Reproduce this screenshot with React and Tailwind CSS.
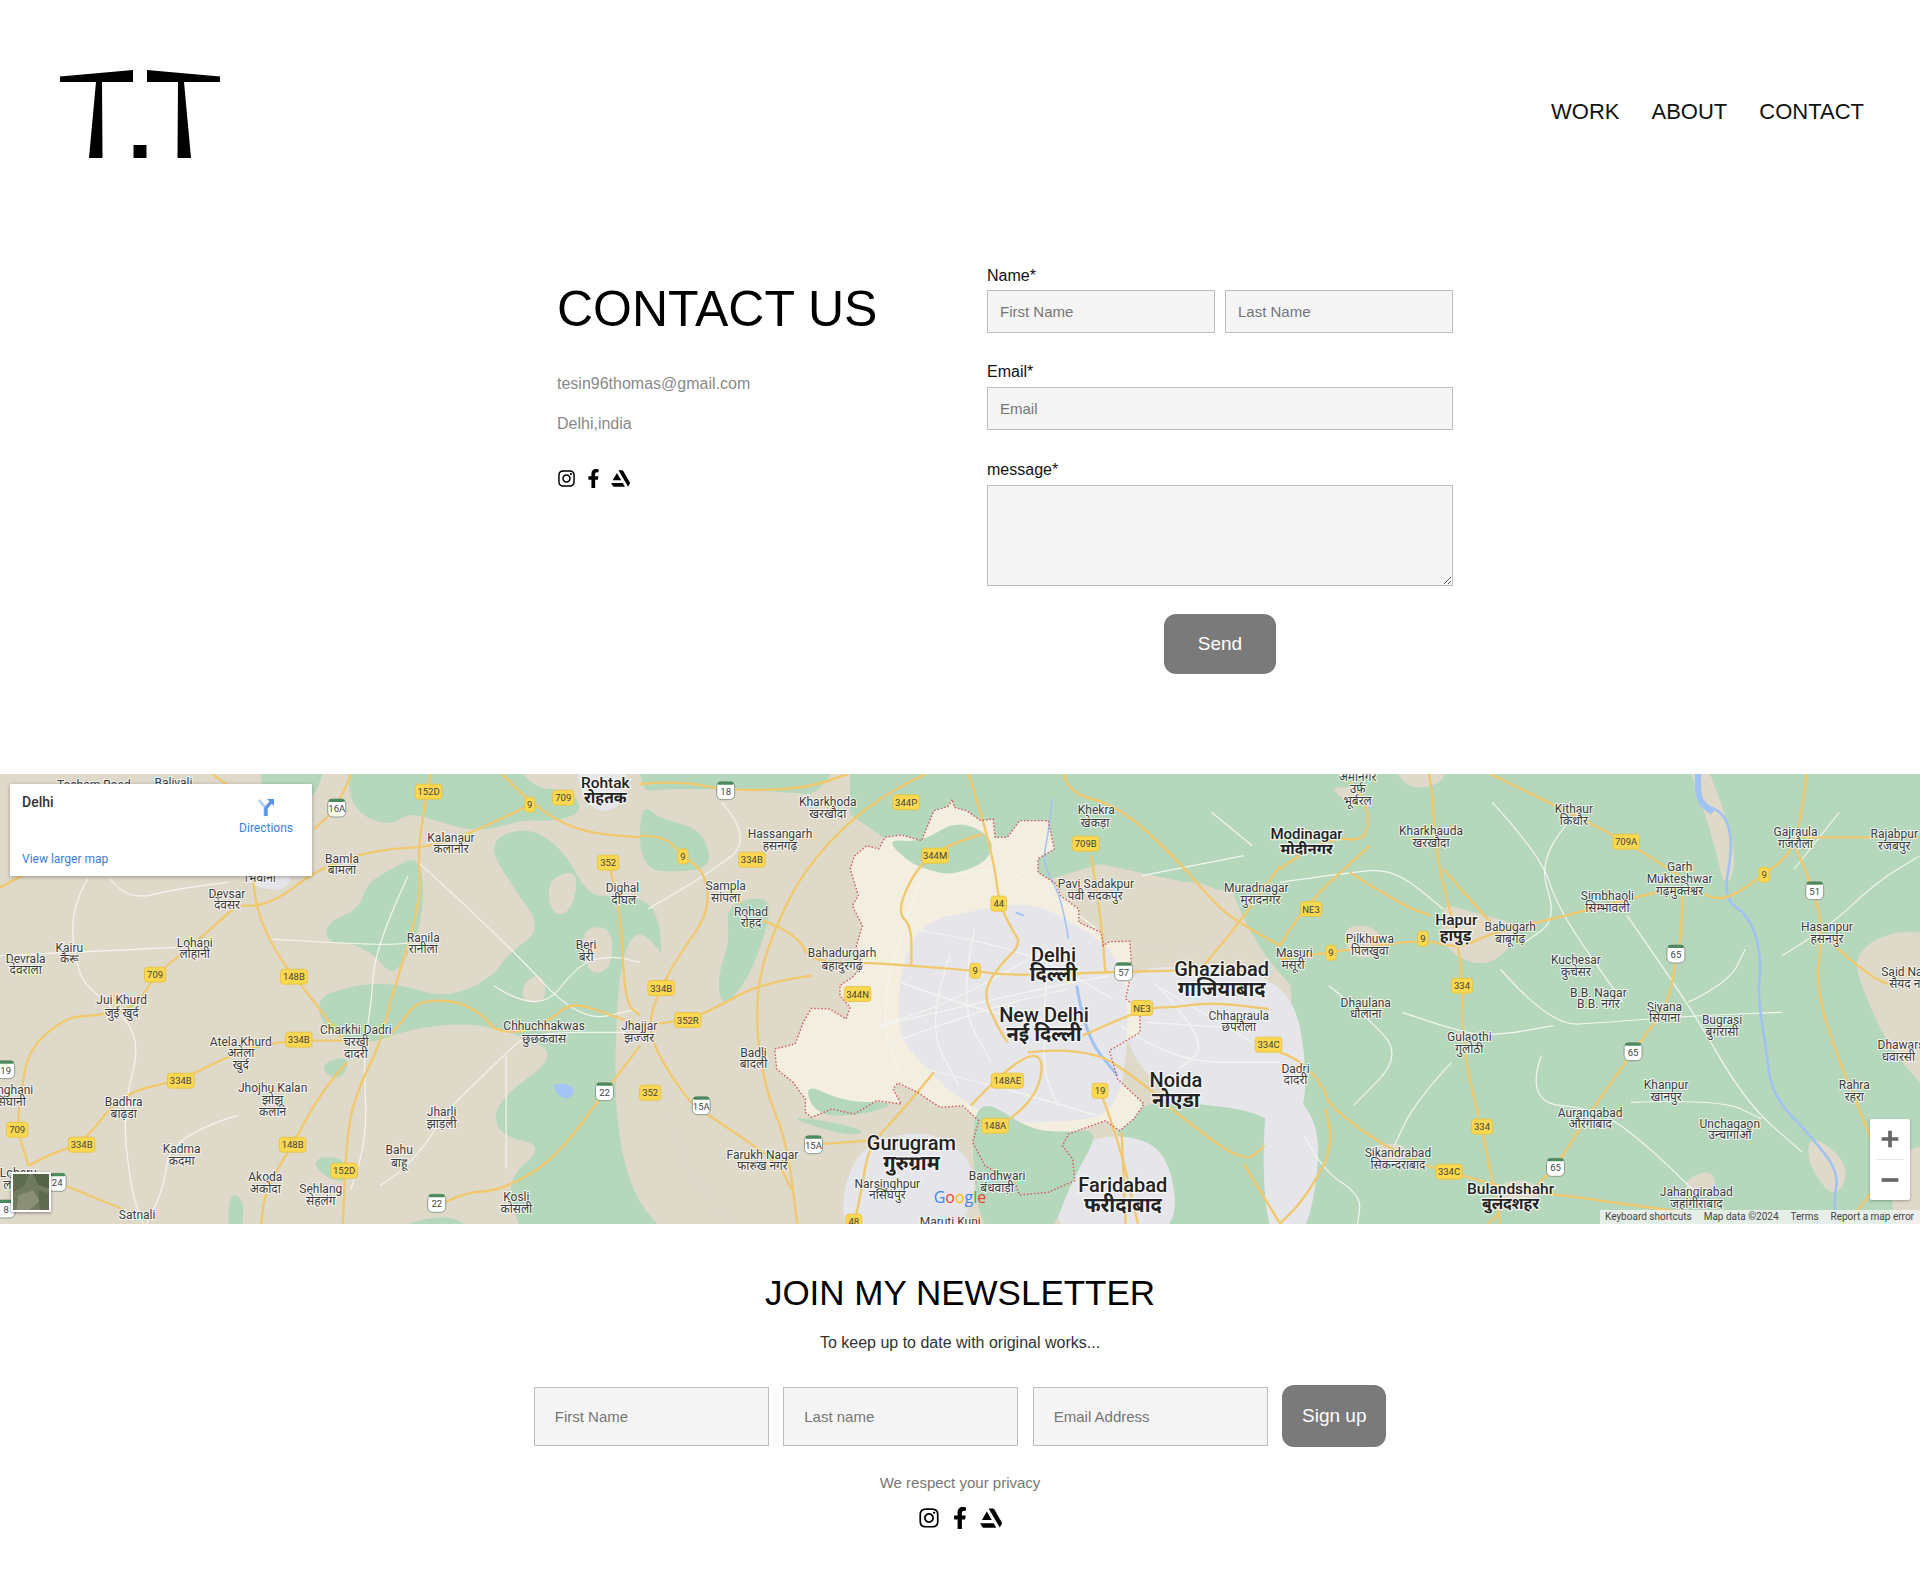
import React from 'react';
import { FaInstagram, FaFacebookF, FaArtstation } from 'react-icons/fa';

// map features are stored in crop coordinates: three panels, each 640px wide
const px = (off, x) => off + x / 2.45;
const py = (y) => y / 3 - 5;

const parse = (str, off) =>
  str.trim().split(/\s+/).map((p) => {
    const [x, y] = p.split(',').map(Number);
    return [px(off, x), py(y)];
  });

const smooth = (str, off, closed) => {
  const pts = parse(str, off);
  if (closed) {
    const mid = (a, b) => [(a[0] + b[0]) / 2, (a[1] + b[1]) / 2];
    const start = mid(pts[pts.length - 1], pts[0]);
    let d = `M${start[0]} ${start[1]}`;
    pts.forEach((p, i) => {
      const m = mid(p, pts[(i + 1) % pts.length]);
      d += ` Q${p[0]} ${p[1]} ${m[0]} ${m[1]}`;
    });
    return d + 'Z';
  }
  let d = `M${pts[0][0]} ${pts[0][1]}`;
  for (let i = 1; i < pts.length - 1; i++) {
    const m = [(pts[i][0] + pts[i + 1][0]) / 2, (pts[i][1] + pts[i + 1][1]) / 2];
    d += ` Q${pts[i][0]} ${pts[i][1]} ${m[0]} ${m[1]}`;
  }
  const last = pts[pts.length - 1];
  return d + ` L${last[0]} ${last[1]}`;
};

const GREEN = '#b5d7bc';
const TAN = '#dfd9ca';
const GRAY = '#e6e6ea';
const BEIGE = '#f3eee0';

const delhiBorder = '765,92 755,112 720,125 690,215 640,198 600,205 585,240 555,230 525,262 515,300 535,380 520,410 545,470 530,530 545,590 520,625 490,650 490,680 515,715 505,750 465,720 420,718 400,760 380,825 330,840 335,900 375,940 405,990 405,1030 420,1045 470,1020 525,1035 580,995 640,1005 620,960 632,942 680,970 735,1015 790,1010 830,1055 815,1120 845,1190 920,1245 930,1278 1000,1270 1065,1235 1060,1170 1035,1130 1050,1095 1140,1055 1175,1085 1210,1050 1235,1005 1170,930 1150,845 1225,790 1225,720 1190,690 1205,600 1200,517 1150,518 1135,530 1130,490 1075,460 1075,420 1030,380 1020,345 975,310 975,270 1015,240 1000,155 930,155 900,205 870,205 865,150 835,155 800,125 770,115 765,92';
const delhiPath = 'M' + parse(delhiBorder, 640).map((p) => p.join(' ')).join(' L');

const areasBeforeDelhi = [
  // left panel
  [0, GREEN, '630,-60 800,-60 780,80 700,130 650,110'],
  [0, GREEN, '860,-100 1060,-100 1220,-100 1300,60 1400,60 1430,130 1350,160 1290,150 1170,190 1080,160 1000,130 960,170 880,140 850,60'],
  [0, GREEN, '800,460 880,420 900,340 960,300 1020,260 1040,340 1030,470 1000,560 960,620 920,560 860,520 800,520'],
  [0, GREEN, '770,690 860,650 960,640 1100,690 1210,620 1240,560 1330,480 1260,360 1190,220 1290,170 1380,240 1440,380 1500,380 1620,400 1620,700 1620,1000 1620,1500 1450,1500 1300,1450 1230,1240 1340,1130 1220,1100 1210,1000 1370,860 1280,800 1150,760 1000,780 900,830 800,790'],
  [0, GREEN, '790,880 860,860 840,930 800,920'],
  [0, GREEN, '560,1270 600,1290 590,1420 560,1420'],
  [0, GREEN, '760,1170 840,1160 860,1240 800,1230'],
  [0, GREEN, '880,1420 1100,1320 1180,1420'],
  [0, TAN, '1280,640 1330,610 1340,700 1280,700'],
  [0, TAN, '1340,330 1420,300 1400,430 1350,440'],
  [0, TAN, '1420,480 1500,470 1500,600 1440,620'],
  [0, GRAY, '1400,-40 1540,-40 1530,120 1440,130'],
  [0, GRAY, '590,300 720,300 700,370 610,350'],
  [0, '#a3c4f5', '1350,940 1410,950 1400,990 1370,985'],
  // middle panel
  [640, TAN, '-60,400 120,640 40,1000 200,1380 400,1420 -60,1420'],
  [640, GREEN, '0,-100 520,-100 440,80 370,70 200,60 60,60 0,70'],
  [640, GREEN, '0,100 50,150 150,180 180,290 100,310 0,300'],
  [640, GREEN, '210,400 330,380 300,520 260,640 200,720 190,620 220,520'],
  [640, GREEN, '350,1040 480,1060 560,1090 500,1100'],
  [640, TAN, '1100,290 1230,350 1420,330 1460,520 1300,540 1160,520'],
  [640, GRAY, '1180,600 1380,590 1600,640 1640,950 1600,1100 1500,1020 1300,1000 1180,820'],
  [640, GRAY, '520,1130 700,1080 800,1150 830,1280 750,1420 480,1420'],
  [640, GRAY, '1030,1230 1060,1130 1180,1090 1300,1150 1320,1420 1020,1420'],
];

const areasAfterDelhi = [
  [640, GRAY, '660,470 830,420 960,400 1060,460 1180,560 1200,780 1170,1040 1020,1060 900,1060 790,1000 700,900 620,780'],
  [640, GREEN, '600,210 690,220 780,150 870,210 850,280 760,320 700,300 660,280'],
  [640, GREEN, '400,940 500,1000 640,1000 540,1040 430,1040'],
  [640, GREEN, '830,980 950,1080 1040,1090 1130,1080 1060,1230 1000,1420 840,1420 810,1140'],
  [640, GREEN, '880,1150 990,1100 1030,1200 930,1250'],
  // right panel
  [1280, TAN, '985,-60 1030,-60 1090,130 1120,280 1090,370 1060,200'],
  [1280, TAN, '1400,560 1500,480 1620,500 1620,1010 1500,850 1440,700'],
  [1280, TAN, '270,-60 420,-60 400,50 300,60'],
  [1280, TAN, '390,400 470,430 600,470 540,570 480,590 400,540'],
  [1280, TAN, '150,470 240,470 260,560 170,570'],
  [1280, TAN, '530,1240 620,1230 640,1300 560,1310'],
  [1280, TAN, '990,1230 1060,1200 1070,1270 1000,1290'],
  [1280, TAN, '1300,1090 1400,1190 1360,1300 1290,1180'],
  [1280, TAN, '1500,1150 1620,1120 1620,1420 1500,1420'],
  [1280, TAN, '110,50 210,60 200,130'],
  [1280, TAN, '210,1130 310,1120 300,1180 230,1180'],
  [1280, GRAY, '-40,900 80,1020 100,1170 60,1420 -40,1420'],
];

const minorRoads = [
  [0, '215,330 170,420 190,620 240,680 350,800 300,1020 320,1260 350,1364'],
  [0, '0,560 180,550 430,535'],
  [0, '660,510 920,530 1030,520'],
  [0, '1000,320 920,530 910,700 890,850 900,1100 860,1260'],
  [0, '270,330 310,395 430,360 560,340'],
  [0, '1025,280 1240,520 1420,760 1560,720'],
  [0, '1210,650 1320,740 1420,580 1500,560 1568,580'],
  [0, '1100,1020 1240,850 1300,790 1530,790'],
  [0, '1240,860 1240,1200'],
  [0, '580,1040 420,1100 400,1260 360,1364'],
  [0, '930,1250 1000,1200 1100,1020'],
  [640, '200,100 280,210 160,320 20,420'],
  [640, '700,300 630,500 590,760 640,920'],
  [640, '590,770 900,680 1150,620'],
  [640, '340,870 590,770 760,700 1000,540'],
  [640, '740,330 860,280 1000,370 1120,480'],
  [640, '660,480 930,530 1160,690'],
  [640, '700,900 900,960 1120,1040'],
  [640, '1180,770 1300,880 1568,880'],
  [640, '1260,640 1400,820 1320,900'],
  [640, '1000,540 980,880 1020,1000'],
  [640, '1400,130 1500,230'],
  [640, '1230,320 1480,260'],
  [640, '760,560 700,760 780,950'],
  [640, '820,480 780,700 860,880'],
  [640, '640,640 900,760 1080,740'],
  [640, '620,820 840,720 1050,660'],
  [640, '1240,760 1500,780'],
  [640, '1280,660 1500,820'],
  [1280, '520,100 640,260 680,420 840,700'],
  [1280, '0,340 170,310 280,300 400,420'],
  [1280, '540,600 660,770 800,760 1010,740 1230,730'],
  [1280, '700,170 630,270 680,450 600,520'],
  [1280, '300,730 440,790 530,800 670,770'],
  [1280, '640,860 600,1000 780,1020 900,1130 1010,1260'],
  [1280, '860,1000 1080,990 1180,1050'],
  [1280, '850,440 1000,700 1140,1000 1280,1150'],
  [1280, '420,880 330,1000 280,1130'],
  [1280, '1370,130 1260,300'],
  [1280, '120,650 210,740 300,860 180,1010'],
  [1280, '60,1100 100,1200 200,1280 190,1364'],
  [1280, '1230,560 1340,480 1460,340 1568,260'],
  [1280, '1000,700 1100,640 1140,540'],
];

const mainRoads = [
  [0, '1055,15 1030,180 1025,280 1030,380 1000,530 960,680 930,830 880,950 850,1080 840,1364'],
  [0, '1300,107 1160,190 1050,235 930,240 800,290 735,340 700,375 640,410 590,410'],
  [0, '860,15 830,110 770,180'],
  [0, '1230,15 1300,107 1420,190 1568,205'],
  [0, '620,330 625,420 680,560 720,620 820,780 840,810'],
  [0, '580,410 490,510 380,617 330,720 230,740 160,745 70,840 50,980 42,1082 70,1190'],
  [0, '70,1190 130,1150 200,1127 300,970 443,935 560,860 680,815 840,815'],
  [0, '1490,281 1520,400 1530,700 1568,740'],
  [0, '950,800 980,770 1010,710 1060,692 1130,700 1190,745 1210,785 1290,790 1350,750 1400,700 1480,730 1568,770'],
  [0, '850,880 790,960 717,1127 650,1260 640,1364'],
  [0, '1060,1320 1130,1270 1230,1265 1360,1170 1481,970 1568,830'],
  [0, '140,1240 300,1320'],
  [0, '0,355 100,290'],
  [0, '520,15 570,60'],
  [640, '805,15 840,150 870,300 880,404 910,480 935,525 880,590 840,670 870,760 900,820'],
  [640, '700,15 620,60 500,170 400,310 340,450 290,620 285,800 310,970 360,1120 385,1364'],
  [640, '0,45 100,35 210,65 400,60 510,15'],
  [640, '0,200 60,200 105,262 160,310 170,430 100,550 50,657 20,760 40,850 120,1000 170,1040 340,1180 370,1260'],
  [640, '300,455 380,490 420,580 550,580 660,590 821,605 900,620 1140,610 1310,605'],
  [640, '420,620 300,640 180,720 117,753 0,770'],
  [640, '720,910 640,1030 560,1130 545,1250 525,1364'],
  [640, '425,1127 560,1115'],
  [640, '1085,800 1230,717 1310,715 1400,700 1540,720'],
  [640, '1127,965 1170,1100 1220,1364'],
  [640, '1180,1090 1190,1364'],
  [640, '810,1010 880,920 960,850 990,880 970,980 900,1060 840,1080'],
  [640, '950,850 1100,830 1240,950 1300,1020 1480,1185 1530,1130'],
  [640, '1040,15 1045,70 1170,110 1300,250 1420,420 1480,470 1568,530'],
  [640, '1105,260 1130,450 1140,610'],
  [640, '840,195 740,230 670,310 630,430 665,470 665,590'],
  [640, '1480,1185 1568,1364'],
  [640, '1568,290 1470,460 1380,590'],
  [1280, '0,300 110,200 215,220 215,100 170,40'],
  [1280, '0,530 50,420 220,230'],
  [1280, '365,15 375,80 380,250 440,540 446,650 450,870 495,1073 540,1364'],
  [1280, '400,300 515,460'],
  [1280, '170,310 300,410 370,440'],
  [1280, '0,570 125,551 350,509 440,540 520,490 700,440 760,420 1000,345 1080,405 1186,317 1265,240 1290,15'],
  [1280, '1265,240 1310,365 1330,500 1310,650 1370,880 1440,1080 1480,1220 1390,1364'],
  [1280, '515,15 660,100 848,218 979,320'],
  [1280, '1260,205 1568,205'],
  [1280, '985,370 985,500 970,555 955,700 865,848 760,1030 675,1195 620,1260'],
  [1280, '1330,500 1440,620 1500,650'],
  [1280, '0,850 50,870 110,960 120,1010 240,1120 355,1190 414,1208 560,1260 700,1280 990,1330'],
  [1280, '110,1020 140,1120 60,1290 0,1364'],
  [1280, '540,1330 510,1364'],
];

const water = [
  [640, '1010,90 1000,200 985,280 1030,380 1050,510', 1.5],
  [640, '1070,650 1090,800 1170,920', 3],
  [640, '920,430 940,440', 2],
  [1280, '1020,15 1020,100 1090,130 1110,230 1085,390 1150,440 1180,560 1170,680 1190,830 1205,980 1300,1100 1370,1210 1355,1300 1370,1364', 2.5],
  [1280, '1025,15 1020,90 1060,130', 6],
];

const yellowShields = [
  [0, '152D', 1050, 68], [0, '709', 1380, 86], [0, '9', 1298, 107], [0, '352', 1490, 281], [0, '709', 380, 617],
  [0, '148B', 720, 623], [0, '334B', 732, 812], [0, '334B', 443, 935], [0, '709', 42, 1082], [0, '334B', 200, 1127],
  [0, '148B', 717, 1127], [0, '152D', 843, 1205],
  [640, '344P', 652, 100], [640, '709B', 1092, 224], [640, '9', 105, 262], [640, '334B', 274, 272], [640, '344M', 723, 260],
  [640, '44', 879, 404], [640, '9', 821, 605], [640, '344N', 533, 675], [640, '334B', 52, 657], [640, '352R', 117, 753],
  [640, 'NE3', 1230, 717], [640, '334C', 1540, 827], [640, '352', 25, 971], [640, '148AE', 900, 935], [640, '19', 1127, 965],
  [640, '148A', 870, 1070], [640, '48', 524, 1358],
  [1280, '709A', 848, 218], [1280, '9', 1186, 317], [1280, 'NE3', 76, 420], [1280, '9', 350, 509], [1280, '9', 125, 551],
  [1280, '334', 446, 650], [1280, '334', 495, 1073], [1280, '334C', 414, 1208],
];

const nhShields = [
  [0, '16A', 825, 117], [0, '19', 14, 902], [0, '22', 1481, 968], [0, '22', 1070, 1303], [0, '24', 140, 1240], [0, '8', 15, 1320],
  [640, '18', 210, 65], [640, '57', 1185, 608], [640, '15A', 150, 1010], [640, '15A', 425, 1127],
  [1280, '51', 1310, 365], [1280, '65', 970, 555], [1280, '65', 865, 848], [1280, '65', 675, 1195],
];

// offset, size, weight, text, x, y
const labels = [
  [0, 15.5, 500, 'Rohtak', 1483, 40], [0, 15.5, 700, 'रोहतक', 1483, 85],
  [0, 12, 400, 'Balivali', 425, 40], [0, 12, 400, 'Tosham Road', 230, 48],
  [0, 12, 400, 'भिवानी', 638, 325],
  [0, 12, 400, 'Loharu', 45, 1212], [0, 12, 400, 'लोहारू', 45, 1248],
  [0, 12, 400, 'Kalanaur', 1105, 205], [0, 12, 400, 'कलानौर', 1105, 240],
  [0, 12, 400, 'Bamla', 838, 268], [0, 12, 400, 'बामला', 838, 303],
  [0, 12, 400, 'Devsar', 556, 373], [0, 12, 400, 'देवसर', 556, 408],
  [0, 12, 400, 'Lohani', 477, 520], [0, 12, 400, 'लोहानी', 477, 555],
  [0, 12, 400, 'Kairu', 170, 535], [0, 12, 400, 'कैरू', 170, 570],
  [0, 12, 400, 'Devrala', 63, 568], [0, 12, 400, 'देवराला', 63, 603],
  [0, 12, 400, 'Ranila', 1037, 505], [0, 12, 400, 'रानीला', 1037, 540],
  [0, 12, 400, 'Beri', 1436, 528], [0, 12, 400, 'बेरी', 1436, 564],
  [0, 12, 400, 'Dighal', 1525, 357], [0, 12, 400, 'दीघल', 1528, 392],
  [0, 12, 400, 'Jui Khurd', 298, 693], [0, 12, 400, 'जुई खुर्द', 298, 730],
  [0, 12, 400, 'Atela Khurd', 590, 817], [0, 12, 400, 'अतेला', 590, 852], [0, 12, 400, 'खुर्द', 590, 887],
  [0, 12, 400, 'Charkhi Dadri', 872, 783], [0, 12, 400, 'चरखी', 872, 818], [0, 12, 400, 'दादरी', 872, 855],
  [0, 12, 400, 'Chhuchhakwas', 1333, 771], [0, 12, 400, 'छुछकवास', 1333, 808],
  [0, 12, 400, 'Jhajjar', 1566, 770], [0, 12, 400, 'झज्जर', 1566, 805],
  [0, 12, 400, 'Singhani', 25, 963], [0, 12, 400, 'सिंघानी', 25, 998],
  [0, 12, 400, 'Badhra', 303, 999], [0, 12, 400, 'बाढ़डा', 303, 1035],
  [0, 12, 400, 'Jhojhu Kalan', 668, 957], [0, 12, 400, 'झोझू', 668, 993], [0, 12, 400, 'कलान', 668, 1028],
  [0, 12, 400, 'Jharli', 1082, 1029], [0, 12, 400, 'झाड़ली', 1082, 1065],
  [0, 12, 400, 'Kadma', 445, 1140], [0, 12, 400, 'कदमा', 445, 1176],
  [0, 12, 400, 'Bahu', 978, 1143], [0, 12, 400, 'बाहू', 978, 1180],
  [0, 12, 400, 'Akoda', 650, 1224], [0, 12, 400, 'अकोदा', 650, 1260],
  [0, 12, 400, 'Sehlang', 786, 1260], [0, 12, 400, 'सेहलंग', 786, 1296],
  [0, 12, 400, 'Kosli', 1265, 1284], [0, 12, 400, 'कोसली', 1265, 1320],
  [0, 12, 400, 'Satnali', 336, 1338],
  [640, 12, 400, 'Kharkhoda', 460, 97], [640, 12, 400, 'खरखौदा', 460, 133],
  [640, 12, 400, 'Khekra', 1118, 123], [640, 12, 400, 'खेकड़ा', 1115, 160],
  [640, 12, 400, 'Hassangarh', 343, 193], [640, 12, 400, 'हसनगढ़', 343, 230],
  [640, 12, 400, 'Sampla', 210, 350], [640, 12, 400, 'सांपला', 210, 385],
  [640, 12, 400, 'Rohad', 272, 427], [640, 12, 400, 'रोहद', 272, 462],
  [640, 12, 400, 'Pavi Sadakpur', 1117, 343], [640, 12, 400, 'पवी सदकपुर', 1115, 379],
  [640, 12, 400, 'Muradnagar', 1510, 355], [640, 12, 400, 'मुरादनगर', 1520, 392],
  [640, 12, 400, 'Bahadurgarh', 495, 552], [640, 12, 400, 'बहादुरगढ़', 495, 589],
  [640, 20, 500, 'Delhi', 1013, 556], [640, 20, 700, 'दिल्ली', 1013, 614],
  [640, 20, 500, 'Ghaziabad', 1425, 598], [640, 20, 700, 'गाजियाबाद', 1425, 660],
  [640, 20, 500, 'New Delhi', 990, 736], [640, 20, 700, 'नई दिल्ली', 990, 795],
  [640, 12, 400, 'Chhapraula', 1467, 739], [640, 12, 400, 'छपरौला', 1467, 774],
  [640, 12, 400, 'Badli', 278, 850], [640, 12, 400, 'बादली', 278, 885],
  [640, 20, 500, 'Noida', 1313, 932], [640, 20, 700, 'नोएडा', 1313, 992],
  [640, 12, 400, 'Farukh Nagar', 300, 1156], [640, 12, 400, 'फारुख नगर', 300, 1191],
  [640, 20, 500, 'Gurugram', 665, 1120], [640, 20, 700, 'गुरुग्राम', 665, 1180],
  [640, 12, 400, 'Narsinghpur', 606, 1243], [640, 12, 400, 'नर्सिंघपुर', 606, 1278],
  [640, 12, 400, 'Bandhwari', 875, 1221], [640, 12, 400, 'बंधवाड़ी', 875, 1257],
  [640, 20, 500, 'Faridabad', 1183, 1246], [640, 20, 700, 'फरीदाबाद', 1183, 1306],
  [640, 12, 400, 'Maruti Kunj', 760, 1358],
  [1280, 12, 400, 'अमीनगर', 190, 22], [1280, 12, 400, 'उर्फ', 190, 58], [1280, 12, 400, 'भूर्बरल', 190, 94],
  [1280, 15, 500, 'Modinagar', 65, 193], [1280, 15, 700, 'मोदीनगर', 65, 238],
  [1280, 12, 400, 'Kharkhauda', 370, 186], [1280, 12, 400, 'खरखौदा', 370, 222],
  [1280, 12, 400, 'Kithaur', 720, 120], [1280, 12, 400, 'किथौर', 720, 155],
  [1280, 12, 400, 'Gajraula', 1263, 187], [1280, 12, 400, 'गजरौला', 1263, 223],
  [1280, 12, 400, 'Rajabpur', 1505, 193], [1280, 12, 400, 'रजबपुर', 1505, 229],
  [1280, 12, 400, 'Garh', 979, 292], [1280, 12, 400, 'Mukteshwar', 979, 328], [1280, 12, 400, 'गढ़मुक्तेश्वर', 979, 364],
  [1280, 12, 400, 'Simbhaoli', 802, 381], [1280, 12, 400, 'सिम्भावली', 802, 416],
  [1280, 15.5, 500, 'Hapur', 432, 452], [1280, 15.5, 700, 'हापुड़', 430, 498],
  [1280, 12, 400, 'Babugarh', 564, 472], [1280, 12, 400, 'बाबूगढ़', 564, 508],
  [1280, 12, 400, 'Hasanpur', 1340, 473], [1280, 12, 400, 'हसनपुर', 1340, 508],
  [1280, 12, 400, 'Pilkhuwa', 220, 510], [1280, 12, 400, 'पिलखुवा', 220, 546],
  [1280, 12, 400, 'Masuri', 35, 550], [1280, 12, 400, 'मसूरी', 32, 586],
  [1280, 12, 400, 'Kuchesar', 725, 571], [1280, 12, 400, 'कुचेसर', 725, 607],
  [1280, 12, 400, 'Said Nagar', 1545, 609], [1280, 12, 400, 'सैयद नगर', 1545, 645],
  [1280, 12, 400, 'B.B. Nagar', 780, 670], [1280, 12, 400, 'B.B. नगर', 780, 705],
  [1280, 12, 400, 'Dhaulana', 210, 700], [1280, 12, 400, 'धौलाना', 210, 735],
  [1280, 12, 400, 'Siyana', 942, 712], [1280, 12, 400, 'सियाना', 942, 747],
  [1280, 12, 400, 'Bugrasi', 1083, 751], [1280, 12, 400, 'बुगरासी', 1083, 787],
  [1280, 12, 400, 'Gulaothi', 464, 804], [1280, 12, 400, 'गुलोठी', 464, 840],
  [1280, 12, 400, 'Dhawarsi', 1525, 828], [1280, 12, 400, 'धवारसी', 1515, 864],
  [1280, 12, 400, 'Dadri', 38, 898], [1280, 12, 400, 'दादरी', 38, 933],
  [1280, 12, 400, 'Khanpur', 946, 946], [1280, 12, 400, 'खानपुर', 946, 982],
  [1280, 12, 400, 'Rahra', 1407, 946], [1280, 12, 400, 'रहरा', 1407, 982],
  [1280, 12, 400, 'Aurangabad', 760, 1030], [1280, 12, 400, 'औरंगाबाद', 760, 1065],
  [1280, 12, 400, 'Unchagaon', 1102, 1063], [1280, 12, 400, 'उन्चागाओं', 1102, 1098],
  [1280, 12, 400, 'Sikandrabad', 289, 1152], [1280, 12, 400, 'सिकन्दराबाद', 289, 1188],
  [1280, 12, 400, 'Jahangirabad', 1020, 1267], [1280, 12, 400, 'जहांगीराबाद', 1020, 1303],
  [1280, 15.5, 500, 'Bulandshahr', 565, 1258], [1280, 15.5, 700, 'बुलंदशहर', 565, 1303],
];

const MapDrawing = () => (
  <svg viewBox="0 0 1920 450" className="block w-full h-full" style={{ fontFamily: "Roboto, 'Noto Sans Devanagari', 'Noto Sans', sans-serif" }}>
    <rect width="1920" height="450" fill={TAN} />
    {/* large green: everything east of Delhi, and the band north of it */}
    <path d="M1230 0 H1920 V450 H1110 L1120 340 Q1190 320 1240 290 Q1300 260 1290 210 Q1250 170 1230 110Z" fill={GREEN} />
    <path d="M850 0 H1240 V120 L1100 90 L1050 105 L980 90 L900 75 L850 40Z" fill={GREEN} />
    {areasBeforeDelhi.map(([off, fill, pts], i) => (
      <path key={i} d={smooth(pts, off, true)} fill={fill} />
    ))}
    <path d={delhiPath} fill={BEIGE} />
    {areasAfterDelhi.map(([off, fill, pts], i) => (
      <path key={i} d={smooth(pts, off, true)} fill={fill} />
    ))}
    {minorRoads.map(([off, pts], i) => (
      <path key={i} d={smooth(pts, off)} fill="none" stroke="#f3f5f0" strokeWidth="1.2" />
    ))}
    {water.map(([off, pts, w], i) => (
      <path key={i} d={smooth(pts, off)} fill="none" stroke="#9fc1f4" strokeWidth={w} />
    ))}
    {mainRoads.map(([off, pts], i) => (
      <path key={i} d={smooth(pts, off)} fill="none" stroke="#f0c96f" strokeWidth="2.4" strokeLinejoin="round" />
    ))}
    <path d={delhiPath} fill="none" stroke="#d2555a" strokeWidth="1.4" strokeDasharray="1.5 2" />
    {nhShields.map(([off, t, x, y], i) => (
      <g key={i} transform={`translate(${px(off, x)} ${py(y)})`}>
        <rect x="-9" y="-9" width="18" height="18" rx="5" fill="#fff" stroke="#8b9a8b" />
        <rect x="-8" y="-9" width="16" height="3" rx="1.5" fill="#4b8a5c" />
        <text y="4" textAnchor="middle" fontSize="9.5" fill="#444">{t}</text>
      </g>
    ))}
    {yellowShields.map(([off, t, x, y], i) => {
      const w = t.length * 5.4 + 5;
      return (
        <g key={i} transform={`translate(${px(off, x)} ${py(y)})`}>
          <rect x={-w / 2} y="-7.5" width={w} height="15" rx="3" fill="#fbd84f" stroke="#e6c040" strokeWidth="0.8" />
          <text y="3.5" textAnchor="middle" fontSize="9.5" fill="#444">{t}</text>
        </g>
      );
    })}
    {labels.map(([off, size, weight, t, x, y], i) => (
      <text
        key={i}
        x={px(off, x)}
        y={py(y) + size * 0.36}
        textAnchor="middle"
        fontSize={size}
        fontWeight={weight}
        fill={size > 12 ? '#222' : '#3c3c3c'}
        stroke="#fff"
        strokeWidth={size > 12 ? 2.5 : 2}
        strokeOpacity="0.75"
        paintOrder="stroke"
      >
        {t}
      </text>
    ))}
    <text x={px(640, 784)} y={py(1285) + 6} textAnchor="middle" fontSize="16" fontFamily="'Open Sans', sans-serif">
      <tspan fill="#4285f4">G</tspan>
      <tspan fill="#ea4335">o</tspan>
      <tspan fill="#fbbc05">o</tspan>
      <tspan fill="#4285f4">g</tspan>
      <tspan fill="#34a853">l</tspan>
      <tspan fill="#ea4335">e</tspan>
    </text>
  </svg>
);

const SocialIcons = ({ big }) => (
  <div className={big ? 'flex items-center justify-center gap-[9px] text-[22px] text-black' : 'flex items-center gap-[8px] text-[19px] text-black'}>
    <FaInstagram />
    <FaFacebookF />
    <FaArtstation />
  </div>
);

const fieldClass =
  'w-full bg-[#f5f5f5] border border-[#bdbdbd] text-[15px] text-black placeholder:text-[#757575] outline-none';

const Label = ({ children }) => <label className="block text-base leading-[18px] text-[#111]">{children}</label>;

function Header() {
  return (
    <header className="flex items-center justify-between pt-[70px] pl-[60px] pr-[56px]">
      <svg viewBox="0 0 160 88" className="block w-[160px] h-[88px]">
        <path d="M0 6.5 L73 0 V12 H42 L42.5 88 H29 L36 12 H0Z" />
        <path d="M160 6.5 L87 0 V12 H118 L117.5 88 H131 L124 12 H160Z" />
        <rect x="73.5" y="75" width="13" height="13" />
      </svg>
      <nav className="flex items-center gap-8 text-[22px] text-[#111] -mt-[6px]">
        <a>WORK</a>
        <a>ABOUT</a>
        <a>CONTACT</a>
      </nav>
    </header>
  );
}

function ContactSection() {
  return (
    <section className="flex pl-[557px] pt-[109px] pb-[100px]">
      <div className="w-[430px] pt-[15px]">
        <h1 className="text-[50px] leading-[54px] text-black">CONTACT US</h1>
        <p className="mt-[38px] text-base leading-[20px] text-[#8a8a8a]">tesin96thomas@gmail.com</p>
        <p className="mt-[20px] text-base leading-[20px] text-[#8a8a8a]">Delhi,india</p>
        <div className="mt-[35px]">
          <SocialIcons />
        </div>
      </div>
      <form className="w-[466px]">
        <Label>Name*</Label>
        <div className="mt-[5px] flex gap-[10px]">
          <input className={`${fieldClass} h-[43px] px-[12px]`} placeholder="First Name" />
          <input className={`${fieldClass} h-[43px] px-[12px]`} placeholder="Last Name" />
        </div>
        <div className="mt-[30px]">
          <Label>Email*</Label>
        </div>
        <input className={`${fieldClass} h-[43px] px-[12px] mt-[6px] block`} placeholder="Email" />
        <div className="mt-[31px]">
          <Label>message*</Label>
        </div>
        <textarea className={`${fieldClass} h-[101px] mt-[6px] block resize`} />
        <button type="button" className="block mx-auto mt-[28px] w-[112px] h-[60px] rounded-[12px] bg-[#7a7a7a] text-white text-[19px]">
          Send
        </button>
      </form>
    </section>
  );
}

function MapSection() {
  return (
    <section className="relative h-[450px] overflow-hidden">
      <MapDrawing />
      <div className="absolute left-[10px] top-[10px] w-[302px] h-[92px] bg-white shadow-[0_1px_4px_rgba(0,0,0,0.3)] font-['Roboto',sans-serif]">
        <div className="absolute left-[12px] top-[9px] text-sm leading-[18px] font-medium text-[#333]">Delhi</div>
        <div className="absolute right-[19px] top-[13px] flex flex-col items-center">
          <svg viewBox="0 0 20 20" className="w-[20px] h-[20px]">
            <path d="M3 3 L9 10 V19" fill="none" stroke="#b9d0f5" strokeWidth="3" />
            <path d="M10 19 V11 L15 5" fill="none" stroke="#5b93e8" strokeWidth="3.4" />
            <path d="M11 2 H18 V9Z" fill="#5b93e8" />
          </svg>
          <span className="mt-[4px] text-xs leading-[14px] text-[#3b7ddd]">Directions</span>
        </div>
        <a className="absolute left-[12px] top-[68px] text-xs leading-[14px] text-[#3b7ddd]">View larger map</a>
      </div>
      <div className="absolute left-[11px] bottom-[12px] w-[40px] h-[40px] border-2 border-white shadow-[0_1px_3px_rgba(0,0,0,0.4)] bg-[#6f7a5e] overflow-hidden">
        <svg viewBox="0 0 40 40" className="block w-full h-full">
          <path d="M0 0 H18 L12 14 L0 20Z" fill="#5d6b4f" />
          <path d="M22 0 H40 V16 L28 12Z" fill="#556446" />
          <path d="M6 24 L22 18 L30 30 L18 40 H4Z" fill="#8a8f76" />
          <path d="M28 18 L40 22 V40 H30Z" fill="#5f6a50" />
        </svg>
      </div>
      <div className="absolute right-[10px] top-[345px] w-[40px] h-[81px] bg-white rounded-[2px] shadow-[0_1px_3px_rgba(0,0,0,0.3)] flex flex-col items-center">
        <svg viewBox="0 0 24 24" className="w-[40px] h-[40px] p-[10px]">
          <path d="M2 12 H22 M12 2 V22" stroke="#666" strokeWidth="4.4" />
        </svg>
        <div className="w-[28px] h-px bg-[#e6e6e6]" />
        <svg viewBox="0 0 24 24" className="w-[40px] h-[40px] p-[10px]">
          <path d="M2 12 H22" stroke="#666" strokeWidth="4.4" />
        </svg>
      </div>
      <div className="absolute right-0 bottom-0 h-[14px] w-[320px] bg-[#f5f5f5]/75 flex items-center justify-between pl-[5px] pr-[6px] text-[10px] leading-none text-[#444] font-['Roboto',sans-serif]">
        <span>Keyboard shortcuts</span>
        <span>Map data ©2024</span>
        <span>Terms</span>
        <span>Report a map error</span>
      </div>
    </section>
  );
}

function Newsletter() {
  const inputClass = `${fieldClass} !w-[235px] h-[59px] px-[20px]`;
  return (
    <section className="flex flex-col items-center pt-[49px] pb-[55px]">
      <h2 className="text-[35px] leading-[40px] text-black">JOIN MY NEWSLETTER</h2>
      <p className="mt-[20px] text-base leading-[20px] text-[#333]">To keep up to date with original works...</p>
      <div className="mt-[32px] flex items-center gap-[14.5px]">
        <input className={inputClass} placeholder="First Name" />
        <input className={inputClass} placeholder="Last name" />
        <input className={inputClass} placeholder="Email Address" />
        <button type="button" className="w-[104px] h-[62px] rounded-[12px] bg-[#7a7a7a] text-white text-[19px]">
          Sign up
        </button>
      </div>
      <p className="mt-[27px] text-[15px] leading-[18px] text-[#777]">We respect your privacy</p>
      <div className="mt-[15px]">
        <SocialIcons big />
      </div>
    </section>
  );
}

export default function App() {
  return (
    <div className="min-h-[1586px] bg-white font-['Liberation_Sans',Arial,sans-serif]">
      <Header />
      <ContactSection />
      <MapSection />
      <Newsletter />
    </div>
  );
}
